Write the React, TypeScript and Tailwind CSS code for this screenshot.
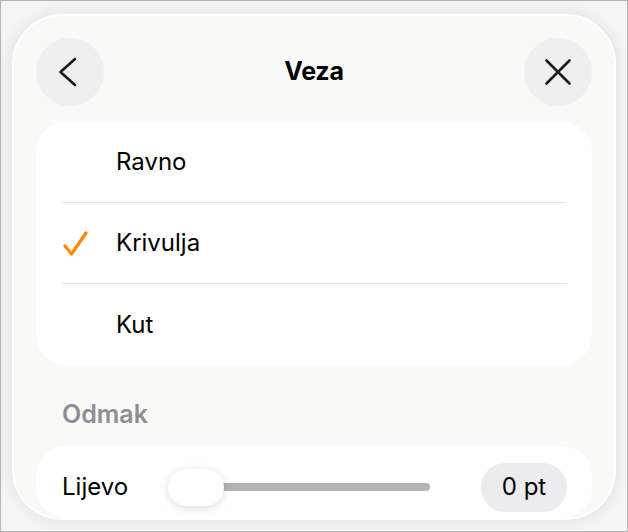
import React from "react";

const font = { fontFamily: "Inter, 'Noto Sans', sans-serif" };

function Check() {
  return (
    <svg width="28" height="28" viewBox="0 0 28 28" className="shrink-0">
      <path d="M4 17 L10.5 25 L25 4" fill="none" stroke="#ff8a00" strokeWidth="3.2" strokeLinecap="round" strokeLinejoin="round" />
    </svg>
  );
}

export default function App() {
  const rows = [
    { label: "Ravno", checked: false },
    { label: "Krivulja", checked: true },
    { label: "Kut", checked: false },
  ];
  return (
    <div className="w-[628px] h-[532px] border border-[#b4b4b4] bg-[#f4f4f4] overflow-hidden" style={font}>
      <div className="ml-[11px] mt-[13px] w-[604px] h-[506px] rounded-[50px] bg-[#f9f9f8] border-2 border-white shadow-[0_0_16px_rgba(0,0,0,0.08)] overflow-hidden px-[22px] pt-[22px] flex flex-col">
        <div className="flex items-center justify-between h-[68px]">
          <div className="w-[68px] h-[68px] rounded-full bg-[#efefef] flex items-center justify-center">
            <svg width="68" height="68" viewBox="0 0 68 68">
              <path d="M39 21 L24.5 34 L39 47" fill="none" stroke="#1c1c1e" strokeWidth="2.6" strokeLinecap="round" strokeLinejoin="round" />
            </svg>
          </div>
          <div className="text-[25px] font-bold text-black tracking-[-0.2px]">Veza</div>
          <div className="w-[68px] h-[68px] rounded-full bg-[#efefef] flex items-center justify-center">
            <svg width="68" height="68" viewBox="0 0 68 68">
              <path d="M22.5 22.5 L45.5 45.5 M45.5 22.5 L22.5 45.5" fill="none" stroke="#1c1c1e" strokeWidth="2.6" strokeLinecap="round" />
            </svg>
          </div>
        </div>

        <div className="mt-[16px] bg-white rounded-[30px] flex flex-col">
          {rows.map((r, i) => (
            <div key={r.label} className="h-[81px] flex flex-col">
              <div className="flex-1 flex items-center pl-[25px]">
                <div className="w-[55px] flex items-center">{r.checked && <Check />}</div>
                <span className="text-[24px] text-black">{r.label}</span>
              </div>
              {i < rows.length - 1 && <div className="mx-[25px] h-px bg-[#e4e4e4]" />}
            </div>
          ))}
        </div>

        <div className="h-[81px] flex items-center pl-[26px] pt-[18px]">
          <span className="text-[25px] font-semibold text-[#8e8e93]">Odmak</span>
        </div>

        <div className="bg-white rounded-[30px] h-[72px] flex items-center pl-[26px] pr-[25px] pt-[10px]">
          <span className="text-[24px] text-black w-[106px]">Lijevo</span>
          <div className="relative w-[262px] h-[37px] flex items-center">
            <div className="ml-[8px] w-[254px] h-[8px] rounded-full bg-[#b3b3b3]" />
            <div className="absolute left-0 top-0 w-[56px] h-[37px] rounded-full bg-white shadow-[0_2px_10px_rgba(0,0,0,0.14)]" />
          </div>
          <div className="flex-1" />
          <div className="w-[86px] h-[49px] rounded-full bg-[#ececee] flex items-center justify-center text-[24px] text-black">0 pt</div>
        </div>
      </div>
    </div>
  );
}
